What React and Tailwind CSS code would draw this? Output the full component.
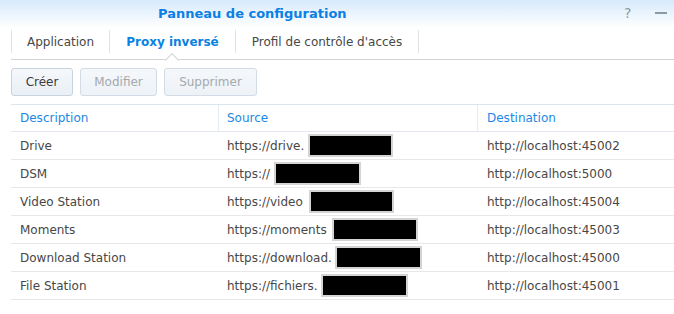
const rows = [
  { name: "Drive", src: "https://drive.", box: "ml-[4px] w-[85px]", dest: "http://localhost:45002" },
  { name: "DSM", src: "https://", box: "ml-[4px] w-[87px]", dest: "http://localhost:5000" },
  { name: "Video Station", src: "https://video ", box: "ml-[2px] w-[85px]", dest: "http://localhost:45004" },
  { name: "Moments", src: "https://moments ", box: "ml-[1px] w-[86px]", dest: "http://localhost:45003" },
  { name: "Download Station", src: "https://download.", box: "ml-[3px] w-[87px]", dest: "http://localhost:45000" },
  { name: "File Station", src: "https://fichiers.", box: "ml-[3px] w-[87px]", dest: "http://localhost:45001" },
];

export default function App() {
  return (
    <div className="h-[314px] w-[674px] overflow-hidden bg-white font-['DejaVu_Sans',sans-serif] text-[12px] text-[#474747]">
      {/* Title bar */}
      <div className="relative flex h-[28px] items-center bg-gradient-to-b from-[#d7eafb] to-white">
        <span className="pl-[158px] text-[13px] font-bold text-[#0b80e4]">
          Panneau de configuration
        </span>
        <span className="absolute left-[624px] top-[5px] text-[14px] leading-[16px] text-[#8c9aa8]">?</span>
        <span className="absolute left-[655px] top-[12px] h-[2px] w-[12px] bg-[#8c9aa8]" />
      </div>

      {/* Tabs */}
      <div className="ml-[11px] flex h-[32px] items-start border-b border-[#d3d3d3]">
        <div className="mt-[2px] flex h-[23px] w-[99px] items-center justify-center border-x border-[#dfe3e8]">
          Application
        </div>
        <div className="relative mt-[2px] flex h-[23px] w-[126px] items-center justify-center border-r border-[#dfe3e8] font-bold text-[#0a82e2]">
          Proxy inversé
          <span className="absolute left-[57px] top-[25px] h-[10px] w-[10px] rotate-45 border-l border-t border-[#d3d3d3] bg-white" />
        </div>
        <div className="mt-[2px] flex h-[23px] w-[183px] items-center justify-center border-r border-[#dfe3e8]">
          Profil de contrôle d'accès
        </div>
      </div>

      {/* Toolbar */}
      <div className="ml-[11px] mt-[8px] flex gap-[7px]">
        <button className="h-[28px] w-[62px] rounded-[3px] border border-[#c8d3df] bg-gradient-to-b from-[#f5f8fb] to-[#e9eff5] text-[#3d3d3d]">
          Créer
        </button>
        <button className="h-[28px] w-[77px] rounded-[3px] border border-[#d3dce6] bg-gradient-to-b from-[#f5f8fb] to-[#edf2f7] text-[#a5a9ad]">
          Modifier
        </button>
        <button className="h-[28px] w-[93px] rounded-[3px] border border-[#d3dce6] bg-gradient-to-b from-[#f5f8fb] to-[#edf2f7] text-[#a5a9ad]">
          Supprimer
        </button>
      </div>

      {/* Table */}
      <div className="ml-[11px] mt-[8px] border-t border-[#d9e6f2]">
        <div className="flex h-[27px] items-center border-b border-[#e3e8ee] text-[#1b88e6]">
          <div className="flex h-full w-[208px] items-center border-r border-[#e3ebf3] pl-[9px]">Description</div>
          <div className="flex h-full w-[259px] items-center border-r border-[#e3ebf3] pl-[8px]">Source</div>
          <div className="flex h-full flex-1 items-center pl-[9px]">Destination</div>
        </div>
        {rows.map((r) => (
          <div key={r.name} className="flex h-[28px] items-center border-b border-[#e8e8e8]">
            <div className="w-[208px] pl-[9px]">{r.name}</div>
            <div className="flex w-[259px] items-center whitespace-pre pl-[8px]">
              {r.src}
              <span className={`inline-block h-[23px] ${r.box} border-2 border-[#d4d4d4] bg-black`} />
            </div>
            <div className="flex-1 pl-[9px]">{r.dest}</div>
          </div>
        ))}
      </div>
    </div>
  );
}
